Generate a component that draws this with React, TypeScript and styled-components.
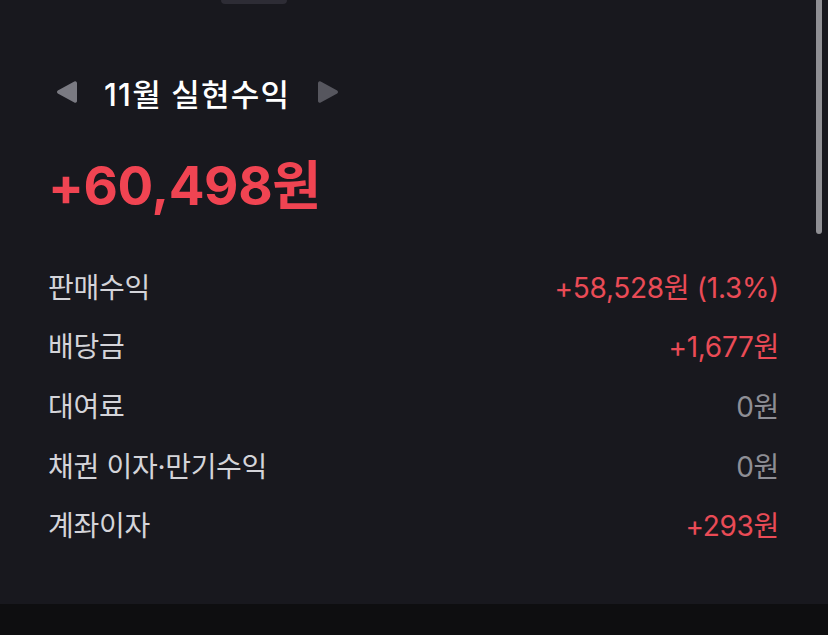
import styled, { createGlobalStyle } from 'styled-components';

const GlobalStyle = createGlobalStyle`
  body {
    margin: 0;
    background: #18181e;
    font-family: Inter, "Noto Sans CJK KR", sans-serif;
    -webkit-font-smoothing: antialiased;
  }
`;

type Row = {
  label: string;
  value: string;
  positive: boolean;
};

const rows: Row[] = [
  { label: '판매수익', value: '+58,528원 (1.3%)', positive: true },
  { label: '배당금', value: '+1,677원', positive: true },
  { label: '대여료', value: '0원', positive: false },
  { label: '채권 이자·만기수익', value: '0원', positive: false },
  { label: '계좌이자', value: '+293원', positive: true },
];

const App = () => {
  return (
    <>
      <GlobalStyle />
      <Screen>
        <Content>
          <Handle />
          <MonthNav>
            <Arrow aria-label='이전 달'>
              <svg width='22' height='24' viewBox='0 0 22 24'>
                <path d='M21 3v18a1.8 1.8 0 0 1-2.7 1.5L1.8 13.5a1.8 1.8 0 0 1 0-3L18.3 1.5A1.8 1.8 0 0 1 21 3z' fill='#7a7a82' />
              </svg>
            </Arrow>
            <MonthTitle>11월 실현수익</MonthTitle>
            <Arrow aria-label='다음 달'>
              <svg width='22' height='24' viewBox='0 0 22 24'>
                <path d='M1 3v18a1.8 1.8 0 0 0 2.7 1.5l16.5-9a1.8 1.8 0 0 0 0-3L3.7 1.5A1.8 1.8 0 0 0 1 3z' fill='#56565e' />
              </svg>
            </Arrow>
          </MonthNav>
          <Total>+60,498원</Total>
          <List>
            {rows.map((row) => (
              <Item key={row.label}>
                <Label>{row.label}</Label>
                <Value $positive={row.positive}>{row.value}</Value>
              </Item>
            ))}
          </List>
        </Content>
        <Footer />
        <Scrollbar />
      </Screen>
    </>
  );
};

export default App;

const Screen = styled.div`
  position: relative;
  height: 635px;
  display: flex;
  flex-direction: column;
  overflow: hidden;
`;

const Content = styled.div`
  flex: 1;
  padding: 0 49px 0 48px;
`;

const Handle = styled.div`
  width: 66px;
  height: 8px;
  margin: -4px 0 0 173px;
  border-radius: 4px;
  background: #2d2c35;
`;

const MonthNav = styled.div`
  display: flex;
  align-items: center;
  margin-top: 73px;
  margin-left: 8px;
  height: 30px;
`;

const Arrow = styled.button`
  display: flex;
  align-items: center;
  justify-content: center;
  padding: 0;
  border: none;
  background: transparent;
  cursor: pointer;
`;

const MonthTitle = styled.h2`
  margin: 0 27px 0 26px;
  font-size: 31px;
  font-weight: 500;
  color: #ffffff;
  letter-spacing: 1.2px;
`;

const Total = styled.div`
  margin-top: 46px;
  font-size: 53px;
  font-weight: 700;
  color: #f04452;
  letter-spacing: -0.4px;
  line-height: 66px;
`;

const List = styled.div`
  display: flex;
  flex-direction: column;
  margin-top: 37px;
`;

const Item = styled.div`
  display: flex;
  justify-content: space-between;
  align-items: center;
  height: 59.6px;
`;

const Label = styled.span`
  font-size: 28px;
  color: #d4d4d9;
  letter-spacing: -0.3px;
`;

const Value = styled.span<{ $positive: boolean }>`
  font-size: 28px;
  color: ${(p) => (p.$positive ? '#ea4b56' : '#8e8e95')};
  letter-spacing: -0.3px;
`;

const Footer = styled.div`
  height: 31px;
  background: #0e0e10;
`;

const Scrollbar = styled.div`
  position: absolute;
  top: -4px;
  right: 6px;
  width: 6px;
  height: 238px;
  border-radius: 3px;
  background: #8f8f94;
`;
